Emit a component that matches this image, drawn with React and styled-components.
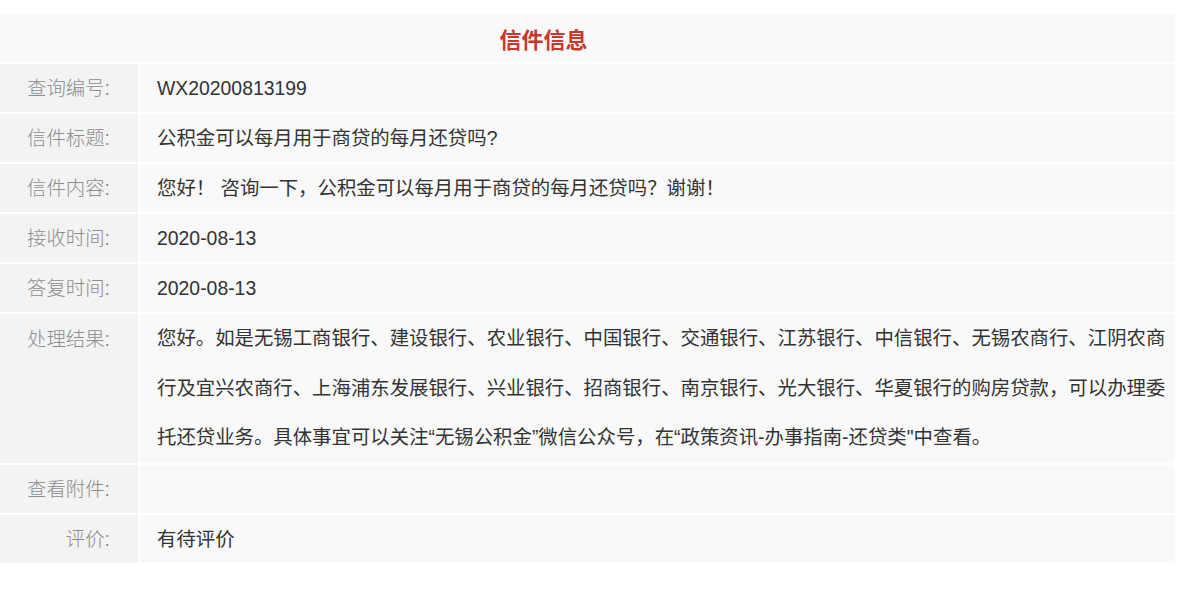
import React from 'react'
import styled, { createGlobalStyle } from 'styled-components'

const GlobalStyle = createGlobalStyle`
  html, body {
    margin: 0;
    padding: 0;
    background: #ffffff;
  }
  body {
    font-family: "Liberation Sans", "Noto Sans CJK SC", sans-serif;
  }
`

const letter = {
  no: 'WX20200813199',
  title: '公积金可以每月用于商贷的每月还贷吗?',
  content: '您好！ 咨询一下，公积金可以每月用于商贷的每月还贷吗？谢谢！',
  received: '2020-08-13',
  replied: '2020-08-13',
  result:
    '您好。如是无锡工商银行、建设银行、农业银行、中国银行、交通银行、江苏银行、中信银行、无锡农商行、江阴农商行及宜兴农商行、上海浦东发展银行、兴业银行、招商银行、南京银行、光大银行、华夏银行的购房贷款，可以办理委托还贷业务。具体事宜可以关注“无锡公积金”微信公众号，在“政策资讯-办事指南-还贷类"中查看。',
  attachment: '',
  rating: '有待评价',
}

export default function App() {
  const rows = [
    ['查询编号', letter.no],
    ['信件标题', letter.title],
    ['信件内容', letter.content],
    ['接收时间', letter.received],
    ['答复时间', letter.replied],
    ['处理结果', letter.result, true],
    ['查看附件', letter.attachment],
    ['评价', letter.rating],
  ]
  return (
    <>
      <GlobalStyle />
      <Page>
        <Table>
          <Heading>信件信息</Heading>
          {rows.map(([label, value, multi]) => (
            <Row key={label}>
              <Label $multi={multi}>{label}:</Label>
              <Value $multi={multi}>{value}</Value>
            </Row>
          ))}
        </Table>
      </Page>
    </>
  )
}

const Page = styled.div`
  padding-top: 14px;
  padding-bottom: 27px;
`

const Table = styled.div`
  width: 1175px;
  display: flex;
  flex-direction: column;
  gap: 2px;
`

const Heading = styled.div`
  height: 48px;
  background: #f9f9f9;
  display: flex;
  align-items: center;
  justify-content: center;
  padding-right: 88px;
  color: #c9382c;
  font-family: "Noto Sans CJK SC", sans-serif;
  font-weight: 700;
  font-size: 22px;
`

const Row = styled.div`
  display: grid;
  grid-template-columns: 138px 1fr;
  gap: 2px;
`

const Label = styled.div`
  background: #f3f3f3;
  min-height: 48px;
  box-sizing: border-box;
  text-align: right;
  padding: 0 28px 0 0;
  color: #8c8c8c;
  font-weight: 300;
  font-size: 19.4px;
  line-height: ${(p) => (p.$multi ? '51px' : '48px')};
`

const Value = styled.div`
  background: #f9f9f9;
  min-height: 48px;
  box-sizing: border-box;
  padding: 0 4px 0 17px;
  color: #333333;
  font-size: 19.4px;
  line-height: ${(p) => (p.$multi ? '49.5px' : '48px')};
`
